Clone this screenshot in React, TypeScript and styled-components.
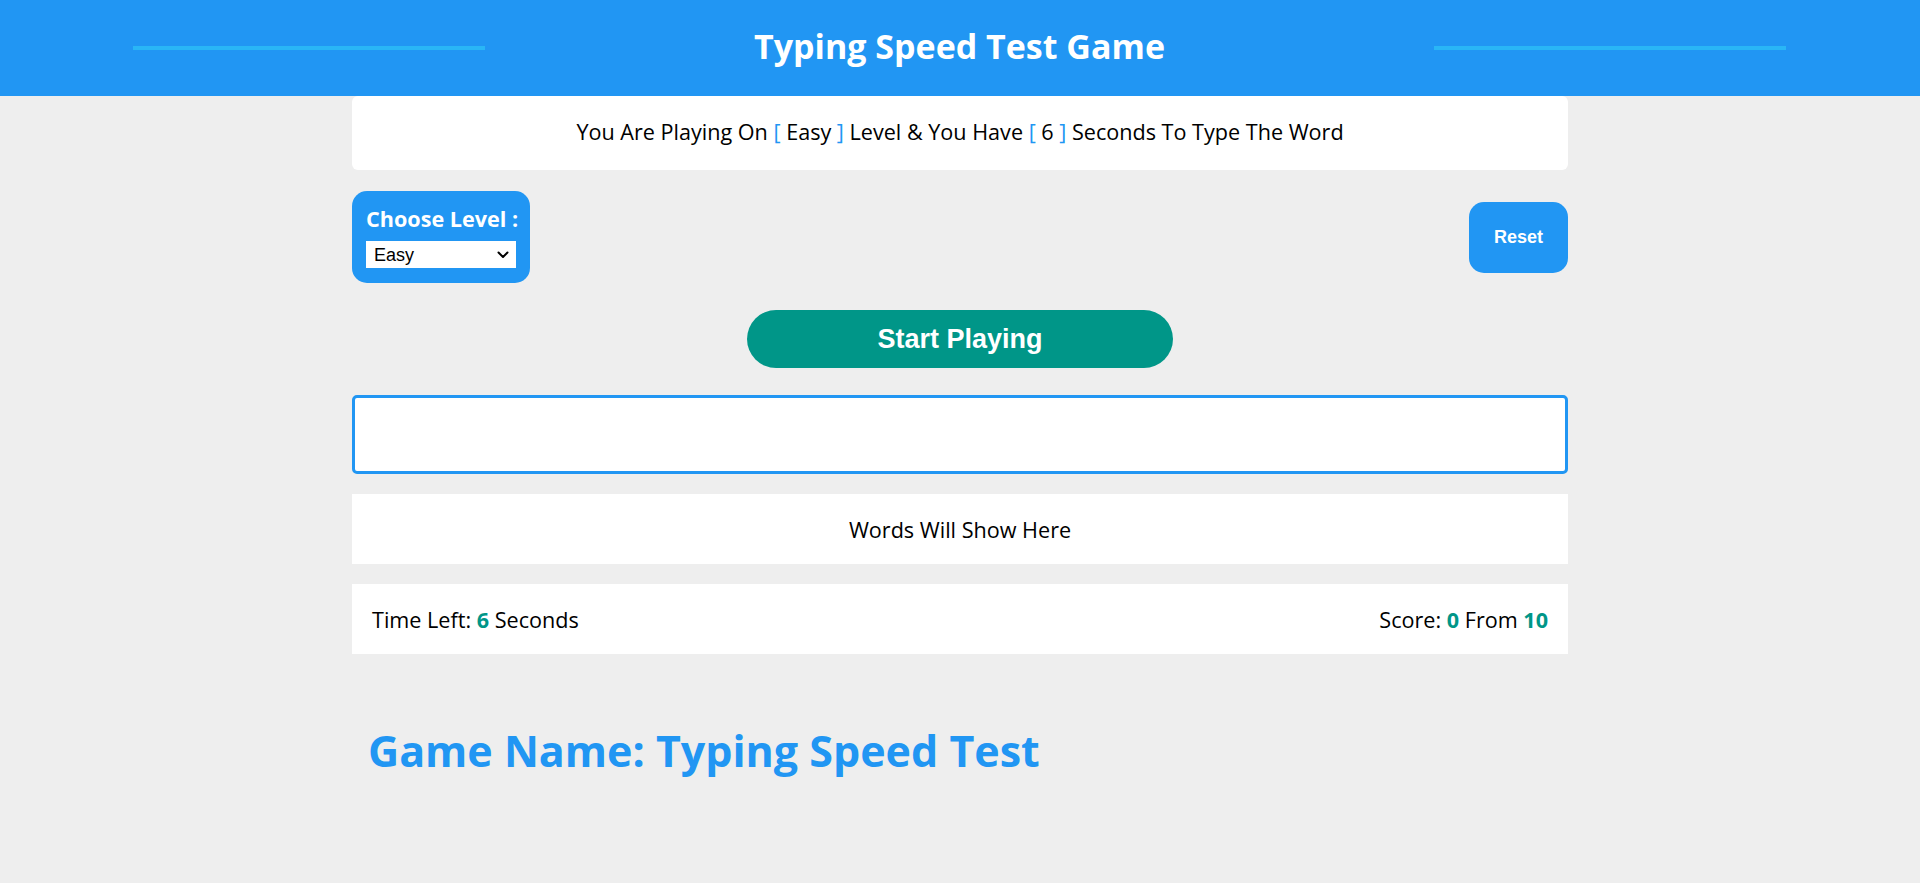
import React from "react";
import styled, { createGlobalStyle } from "styled-components";

const Global = createGlobalStyle`
  * { box-sizing: border-box; }
  body {
    margin: 0;
    background: #eeeeee;
    font-family: "Open Sans", "Liberation Sans", sans-serif;
    color: #000;
  }
`;

const Header = styled.header`
  height: 96px;
  background: #2196f3;
  display: flex;
  align-items: center;
  justify-content: space-between;
  padding: 0 134px 0 133px;
`;

const HeaderLine = styled.span`
  width: 352px;
  height: 4px;
  background: #29b6f6;
`;

const Title = styled.h1`
  margin: 0 0 4px;
  color: #fff;
  font-size: 34px;
  font-weight: 700;
`;

const Container = styled.main`
  width: 1216px;
  margin: 0 auto;
  display: flex;
  flex-direction: column;
`;

const Message = styled.div`
  height: 74px;
  background: #fff;
  border-radius: 6px;
  display: flex;
  align-items: center;
  justify-content: center;
  font-size: 21.6px;
  padding-bottom: 4px;
`;

const Bracket = styled.span`
  color: #2196f3;
`;

const ControlsRow = styled.div`
  margin-top: 21px;
  display: flex;
  justify-content: space-between;
  align-items: center;
`;

const LevelBox = styled.div`
  width: 178px;
  height: 92px;
  background: #2196f3;
  border-radius: 15px;
  padding: 13px 14px 15px;
  display: flex;
  flex-direction: column;
  gap: 8px;
`;

const LevelLabel = styled.label`
  color: #fff;
  font-size: 21.6px;
  font-weight: 700;
  line-height: 29px;
  white-space: nowrap;
`;

const SelectWrap = styled.div`
  position: relative;
  width: 150px;
  height: 27px;
`;

const LevelSelect = styled.select`
  appearance: none;
  -webkit-appearance: none;
  width: 100%;
  height: 100%;
  border: none;
  border-radius: 0;
  background: #fff;
  font-family: Arial, "Liberation Sans", sans-serif;
  font-size: 18px;
  color: #000;
  padding: 0 24px 0 8px;
  outline: none;
`;

const Chevron = styled.svg`
  position: absolute;
  right: 7px;
  top: 10px;
  width: 12px;
  height: 8px;
  pointer-events: none;
`;

const ResetButton = styled.button`
  width: 99px;
  height: 71px;
  border: none;
  border-radius: 15px;
  background: #2196f3;
  color: #fff;
  font-family: Arial, "Liberation Sans", sans-serif;
  font-size: 18px;
  font-weight: 700;
  cursor: pointer;
`;

const StartButton = styled.button`
  margin: 27px auto 0;
  width: 426px;
  height: 58px;
  border: none;
  border-radius: 29px;
  background: #009688;
  color: #fff;
  font-family: Arial, "Liberation Sans", sans-serif;
  font-size: 27px;
  font-weight: 700;
  cursor: pointer;
`;

const TypeInput = styled.input`
  margin-top: 27px;
  height: 79px;
  width: 100%;
  border: 3px solid #2196f3;
  border-radius: 5px;
  background: #fff;
  font-size: 20px;
  padding: 0 16px;
  outline: none;
`;

const WordsBox = styled.div`
  margin-top: 20px;
  height: 70px;
  background: #fff;
  display: flex;
  align-items: center;
  justify-content: center;
  font-size: 21.6px;
`;

const StatsBar = styled.div`
  margin-top: 20px;
  height: 70px;
  background: #fff;
  display: flex;
  align-items: center;
  justify-content: space-between;
  padding: 0 20px;
  font-size: 21.6px;
`;

const Num = styled.span`
  color: #009688;
  font-weight: 700;
`;

const GameName = styled.h2`
  margin: 67px 0 0 16px;
  color: #2196f3;
  font-size: 43px;
  font-weight: 700;
  line-height: normal;
`;

export default function App() {
  return (
    <>
      <Global />
      <Header>
        <HeaderLine />
        <Title>Typing Speed Test Game</Title>
        <HeaderLine />
      </Header>
      <Container>
        <Message>
          You Are Playing On&nbsp;<Bracket>[</Bracket>&nbsp;Easy&nbsp;<Bracket>]</Bracket>&nbsp;Level &amp; You Have&nbsp;
          <Bracket>[</Bracket>&nbsp;6&nbsp;<Bracket>]</Bracket>&nbsp;Seconds To Type The Word
        </Message>
        <ControlsRow>
          <LevelBox>
            <LevelLabel htmlFor="level">Choose Level :</LevelLabel>
            <SelectWrap>
              <LevelSelect id="level" defaultValue="Easy">
                <option>Easy</option>
                <option>Normal</option>
                <option>Hard</option>
              </LevelSelect>
              <Chevron viewBox="0 0 12 8" fill="none">
                <path d="M1.5 1.5 L6 6 L10.5 1.5" stroke="#000" strokeWidth="2" strokeLinecap="round" strokeLinejoin="round" />
              </Chevron>
            </SelectWrap>
          </LevelBox>
          <ResetButton>Reset</ResetButton>
        </ControlsRow>
        <StartButton>Start Playing</StartButton>
        <TypeInput type="text" />
        <WordsBox>Words Will Show Here</WordsBox>
        <StatsBar>
          <span>
            Time Left: <Num>6</Num> Seconds
          </span>
          <span>
            Score: <Num>0</Num> From <Num>10</Num>
          </span>
        </StatsBar>
        <GameName>Game Name: Typing Speed Test</GameName>
      </Container>
    </>
  );
}
